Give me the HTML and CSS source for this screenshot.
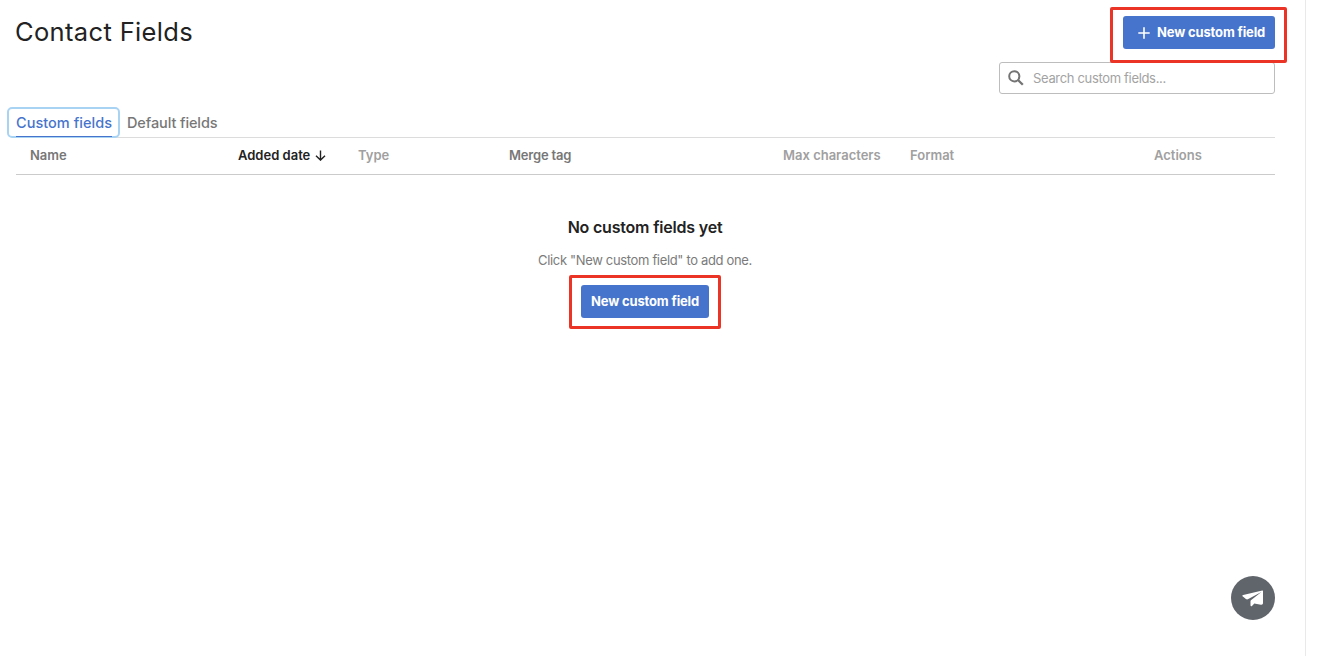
FILE: index.html
```html
<!DOCTYPE html>
<html lang="en">
<head>
    <meta charset="UTF-8">
    <meta name="viewport" content="width=device-width, initial-scale=1.0">
    <title>Contact Fields</title>

    <link rel="stylesheet" href="styles.css">
</head>
<body>
    <main class="page">
        <header class="page-header">
            <h1>Contact Fields</h1>
            <div class="header-action">
                <button class="btn btn-icon">
                    <svg width="12" height="12" viewBox="0 0 12 12"><path d="M6 0.3v11.4M0.3 6h11.4" fill="none" stroke="#fff" stroke-width="1.6"/></svg>
                    <span class="btn-label">New custom field</span>
                </button>
                <div class="highlight highlight-top"></div>
            </div>
        </header>

        <label class="search">
            <svg width="16" height="16" viewBox="0 0 16 16" fill="none" stroke="#747474"><circle cx="6.3" cy="6.3" r="5.1" stroke-width="2"/><path d="M10 10l4.8 4.8" stroke-width="2.3"/></svg>
            <input type="text" placeholder="Search custom fields...">
        </label>

        <nav class="tabs">
            <a class="tab active"><span>Custom fields</span></a>
            <a class="tab"><span>Default fields</span></a>
        </nav>

        <div class="table-head">
            <span class="name">Name</span>
            <span class="sorted">Added date <svg width="11" height="11" viewBox="0 0 11 11"><path d="M5.5 0.5v9.5M1 5.7l4.5 4.4L10 5.7" fill="none" stroke="#222" stroke-width="1.4"/></svg></span>
            <span>Type</span>
            <span class="merge">Merge tag</span>
            <span>Max characters</span>
            <span>Format</span>
            <span>Actions</span>
        </div>

        <section class="empty">
            <h2>No custom fields yet</h2>
            <p>Click "New custom field" to add one.</p>
            <div class="highlight">
                <button class="btn"><span class="btn-label">New custom field</span></button>
            </div>
        </section>
    </main>

    <button class="chat" aria-label="Send message">
        <svg width="22" height="17" viewBox="0 0 22 17"><path d="M20.3 0.6L1.2 4.9C0.1 5.2 0.1 6 0.9 6.6L3.9 9c0.7 0.5 1.6 0.5 2.4 0.1L19.4 1.9 8.9 10.3c-0.3 0.3-0.4 0.6-0.4 1v4c0 1.2 0.9 1.3 1.5 0.6l2.3-2.5 6.6 1.3c1.3 0.2 2.1-0.4 2.1-1.6V1.3c0-0.6-0.2-0.8-0.7-0.7z" fill="#fff"/></svg>
    </button>
</body>
</html>
```
FILE: styles.css
```css
* {
    box-sizing: border-box;
}
body {
    margin: 0;
    height: 656px;
    overflow: hidden;
    background-color: #fff;
    font-family: Inter, "Open Sans", sans-serif;
    color: #222;
}
.page {
    width: 1306px;
    height: 656px;
    padding: 16px 30px 0 16px;
    border-right: 1px solid #e9e9e9;
}
.page-header {
    display: flex;
    justify-content: space-between;
    height: 46px;
}
h1 {
    margin: 0 0 0 -1px;
    font-size: 25.5px;
    font-weight: 400;
    letter-spacing: 0.35px;
    line-height: 31px;
    white-space: nowrap;
}
.header-action {
    position: relative;
    height: 33px;
}
.btn {
    display: flex;
    align-items: center;
    justify-content: center;
    width: 128px;
    height: 33px;
    padding: 0;
    border: none;
    border-radius: 3px;
    background-color: #4674cc;
    color: #fff;
    font-family: inherit;
    font-size: 13px;
    font-weight: 700;
    letter-spacing: -0.15px;
    white-space: nowrap;
    cursor: pointer;
}
.btn-icon {
    justify-content: flex-start;
    width: 152px;
    padding-left: 15px;
    gap: 7px;
}
.btn-label {
    padding-bottom: 2px;
}
.highlight {
    border: 3px solid #eb3426;
    border-radius: 2px;
}
/* marker frame drawn around the header button */
.highlight-top {
    position: absolute;
    left: -13px;
    top: -9px;
    width: 177px;
    height: 56px;
    pointer-events: none;
}
.search {
    display: flex;
    align-items: center;
    gap: 9px;
    width: 276px;
    height: 32px;
    margin-left: auto;
    padding: 0 9px 0 8px;
    border: 1px solid #bdbdbd;
    border-radius: 3px;
}
.search input {
    flex: 1;
    min-width: 0;
    padding: 0;
    border: none;
    outline: none;
    background: none;
    font-family: inherit;
    font-size: 13px;
    letter-spacing: -0.33px;
}
.search input::placeholder {
    color: #a3a3a3;
}
.tabs {
    display: flex;
    height: 44px;
    padding-top: 13px;
    border-bottom: 1px solid #dcdcdc;
}
.tab {
    height: 31px;
    padding: 0 7px;
    color: #777;
    font-size: 14.5px;
    font-weight: 500;
    letter-spacing: -0.11px;
    line-height: 32px;
    white-space: nowrap;
}
.tab.active {
    width: 113px;
    margin-left: -9px;
    padding: 0 7px;
    border: 2px solid #a9d3f3;
    border-radius: 5px;
    color: #4674cc;
    letter-spacing: 0.03px;
    line-height: 28px;
}
.tab.active span {
    display: block;
    height: 28px;
    width: 96px;
    border-bottom: 1px solid #4674cc;
}
.table-head {
    display: grid;
    grid-template-columns: 208px 120px 151px 274px 127px 244px 135px;
    height: 37px;
    border-bottom: 1px solid #cbcbcb;
    color: #a0a0a0;
    font-size: 13px;
    font-weight: 600;
    line-height: 35px;
    white-space: nowrap;
}
.table-head span {
    padding-left: 14px;
}
.table-head .name,
.table-head .merge {
    color: #777;
}
.table-head .merge {
    letter-spacing: -0.2px;
}
.table-head .sorted {
    color: #222;
}
.sorted svg {
    margin-left: 1px;
    vertical-align: -1px;
}
.empty {
    display: flex;
    flex-direction: column;
    align-items: center;
    width: 1258px;
    padding-top: 42px;
}
h2 {
    margin: 0;
    font-size: 16px;
    font-weight: 600;
    letter-spacing: -0.2px;
    line-height: 20px;
    white-space: nowrap;
}
.empty p {
    margin: 13px 0 5px;
    color: #7b7b7b;
    font-size: 13px;
    letter-spacing: -0.34px;
    line-height: 20px;
    white-space: nowrap;
}
.empty .highlight {
    width: 152px;
    height: 54px;
    padding: 7px 9px;
}
.chat {
    position: fixed;
    right: 49px;
    bottom: 36px;
    display: flex;
    align-items: center;
    justify-content: center;
    width: 44px;
    height: 44px;
    padding: 0;
    border: none;
    border-radius: 50%;
    background-color: #60656b;
    cursor: pointer;
}
```
